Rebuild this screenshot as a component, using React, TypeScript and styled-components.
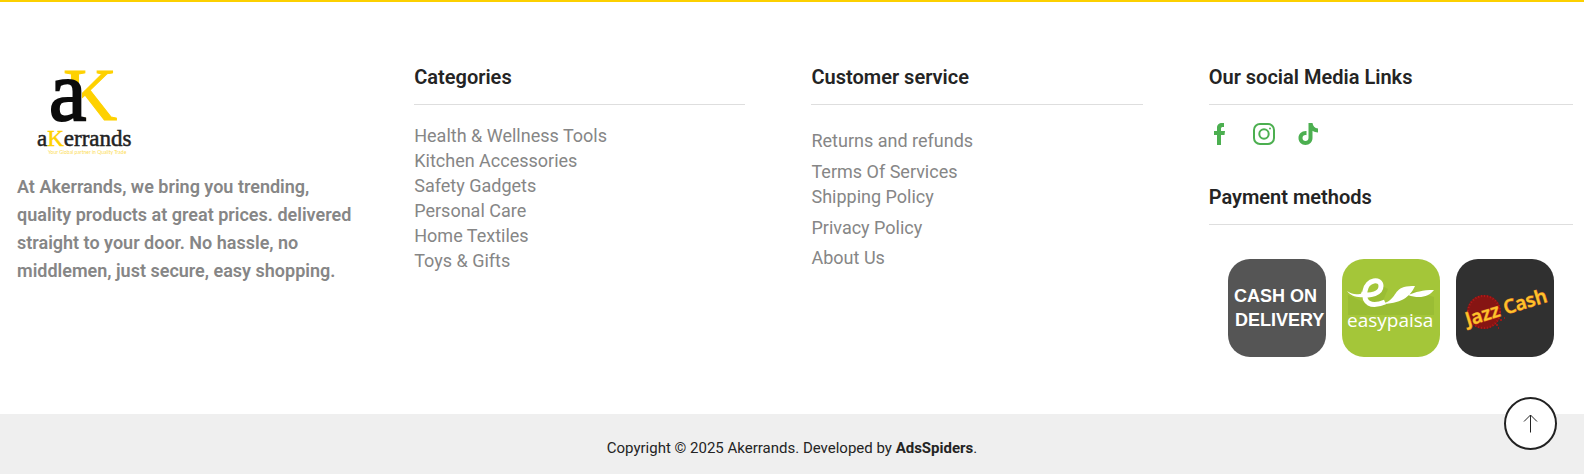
import React from 'react';
import styled, { createGlobalStyle } from 'styled-components';

const GlobalStyle = createGlobalStyle`
  *, *::before, *::after { box-sizing: border-box; }
  body { margin: 0; background: #fff; color: #242424; font-family: Roboto, "Liberation Sans", sans-serif; }
  h2, p, ul { margin: 0; padding: 0; }
  ul { list-style: none; }
  a { color: inherit; text-decoration: none; }
  svg { display: block; overflow: visible; }
`;

const Page = styled.footer`
  border-top: 2px solid #fcd000;
`;

const Columns = styled.div`
  display: grid;
  grid-template-columns: repeat(3, minmax(0, 331fr)) minmax(0, 364fr);
  column-gap: 66px;
  padding: 60px 11px 57px 17px;
`;

const Column = styled.section``;

const Brand = styled.a`
  display: block;
  width: 133px;
  margin-bottom: 8px;
`;

const About = styled.p`
  margin-right: -8px;
  color: #868686;
  font-size: 18px;
  font-weight: 600;
  line-height: 28px;
`;

const Heading = styled.h2`
  height: 43px;
  border-bottom: 1px solid #dedede;
  font-size: 20px;
  font-weight: 600;
  line-height: 30px;
`;

const Links = styled.ul<{ $top: number }>`
  padding-top: ${(p) => p.$top}px;
  color: #868686;
  font-size: 18px;
  line-height: 25px;
`;

const LinkItem = styled.li<{ $gap?: number }>`
  margin-bottom: ${(p) => p.$gap ?? 0}px;
`;

const Socials = styled.ul`
  display: flex;
  gap: 22px;
  padding: 17px 0 36px;
`;

const Payments = styled.ul`
  display: flex;
  justify-content: center;
  gap: 16px;
  padding-top: 34px;
`;

const Tile = styled.li`
  width: 98px;
  height: 98px;
`;

const Bottom = styled.div`
  padding: 22px 0 14px;
  background: #efefef;
  font-size: 15px;
  line-height: 24px;
  text-align: center;

  strong { font-weight: 700; }
`;

const ToTop = styled.button`
  position: fixed;
  right: 27px;
  bottom: 24px;
  display: grid;
  place-items: center;
  width: 53px;
  height: 53px;
  padding: 0;
  border: 2px solid #222;
  border-radius: 50%;
  background: #fff;
  color: #222;
  cursor: pointer;
`;

const Logo = () => (
  <svg width="133" height="103" viewBox="0 0 133 103" role="img" aria-label="aKerrands">
    <g fontFamily="Liberation Serif, serif">
      <text x="46" y="58" fontSize="75" fill="#fed100" stroke="#fed100">K</text>
      <path d="M44 18c12-2 20 2 21 12v30H44z" fill="#fff" />
      <text x="32" y="58" fontSize="84" stroke="#0b0b0b" strokeWidth="2" fill="#0b0b0b">a</text>
      <text x="20" y="84" fontSize="23" stroke="#222" strokeWidth="0.5" fill="#222">a<tspan fill="#fed100" stroke="#fed100">K</tspan>errands</text>
    </g>
    <text x="31" y="92" fontFamily="Lato, sans-serif" fontSize="5" fill="#fddd55">Your Global partner in Quality Trade</text>
  </svg>
);

const FacebookIcon = () => (
  <svg width="22" height="24" viewBox="0 0 22 24" fill="#4caf50" aria-hidden="true">
    <path d="M8 23V13H5V9h3V6C8 2.500 10 1 13 1h2v4h-1c-1.500 0-2 .6-2 2v2h4l-.5 4H12v10z" />
  </svg>
);

const InstagramIcon = () => (
  <svg width="22" height="24" viewBox="0 0 22 24" fill="none" stroke="#4caf50" strokeWidth="2" aria-hidden="true">
    <rect x="1" y="2" width="20" height="20" rx="6" />
    <circle cx="11" cy="12" r="4.700" />
    <circle cx="17" cy="6.500" r="1" fill="#4caf50" stroke="none" />
  </svg>
);

const TiktokIcon = () => (
  <svg width="22" height="24" viewBox="0 0 22 24" fill="#4caf50" aria-hidden="true">
    <path d="M11.500 1h4c.3 3 2.200 5.200 5.500 5.500v4c-2.100 0-3.900-.6-5.500-1.700V16c0 4-3 7-7 7s-7-3-7-7 3.400-7.300 8-6.900v4.100C7.200 12.700 5.500 14 5.500 16c0 1.700 1.300 3 3 3s3-1.300 3-3z" />
  </svg>
);

const CashOnDelivery = () => (
  <svg width="98" height="98" viewBox="0 0 98 98" role="img" aria-label="Cash on delivery">
    <rect width="98" height="98" rx="22" fill="#555" />
    <g fill="#fff" fontFamily="Liberation Sans, sans-serif" fontWeight="700" fontSize="18">
      <text x="6" y="43">CASH ON</text>
      <text x="7" y="67">DELIVERY</text>
    </g>
  </svg>
);

const Easypaisa = () => (
  <svg width="98" height="98" viewBox="0 0 98 98" role="img" aria-label="easypaisa">
    <rect width="98" height="98" rx="22" fill="#a4c639" />
    <path d="M6 36l18 8 14-18 8 4-6 14h8l15-10 10-2 19 6v18H6z" fill="#9abd34" />
    <path d="M19 35c10 3 20-1 20-8 0-8-14-7-16 5-2 12 6 17 20 11" fill="none" stroke="#fff" strokeWidth="5" />
    <path d="M5 32c6 4 10 4 17 2v4C14 39 8 36 5 32zM38 45c16-2 13-14 24-17 3-1 7-1 11-1-5 11-14 18-35 18zM66 36c8-3 14-5 26-5-5 7-15 9-26 5z" fill="#fff" />
    <text x="5" y="68" fill="#fff" fontFamily="Open Sans, sans-serif" fontSize="19">easypaisa</text>
  </svg>
);

const JazzCash = () => (
  <svg width="98" height="98" viewBox="0 0 98 98" role="img" aria-label="Jazz Cash">
    <rect width="98" height="98" rx="22" fill="#303030" />
    <circle cx="28" cy="53" r="17" fill="#861513" />
    <circle cx="28" cy="53" r="16" fill="none" stroke="#b51a1a" strokeWidth="2" strokeDasharray="1 2" />
    <path d="M40 66h2m2-5h2m-4 8h1m5-10h1" stroke="#981818" strokeWidth="2" />
    <g transform="rotate(-17 12 68)" fill="#fdc52b" stroke="#e07a20" strokeWidth="1" paintOrder="stroke" fontFamily="Open Sans, sans-serif" fontWeight="600" fontSize="19">
      <text x="12" y="67">Jazz Cash</text>
    </g>
  </svg>
);

const categories = ['Health & Wellness Tools', 'Kitchen Accessories', 'Safety Gadgets', 'Personal Care', 'Home Textiles', 'Toys & Gifts'];

const services = [
  { label: 'Returns and refunds', gap: 6 },
  { label: 'Terms Of Services', gap: 0 },
  { label: 'Shipping Policy', gap: 6 },
  { label: 'Privacy Policy', gap: 5 },
  { label: 'About Us', gap: 0 },
];

const socials = [
  { name: 'Facebook', Icon: FacebookIcon },
  { name: 'Instagram', Icon: InstagramIcon },
  { name: 'TikTok', Icon: TiktokIcon },
];

export default function App() {
  return (
    <>
      <GlobalStyle />
      <Page>
        <Columns>
          <Column>
            <Brand href="#"><Logo /></Brand>
            <About>At Akerrands, we bring you trending, quality products at great prices. delivered straight to your door. No hassle, no middlemen, just secure, easy shopping.</About>
          </Column>
          <Column>
            <Heading>Categories</Heading>
            <Links $top={18}>
              {categories.map((label) => <LinkItem key={label}><a href="#">{label}</a></LinkItem>)}
            </Links>
          </Column>
          <Column>
            <Heading>Customer service</Heading>
            <Links $top={23}>
              {services.map(({ label, gap }) => <LinkItem key={label} $gap={gap}><a href="#">{label}</a></LinkItem>)}
            </Links>
          </Column>
          <Column>
            <Heading>Our social Media Links</Heading>
            <Socials>
              {socials.map(({ name, Icon }) => <li key={name}><a href="#" aria-label={name}><Icon /></a></li>)}
            </Socials>
            <Heading>Payment methods</Heading>
            <Payments>
              <Tile><CashOnDelivery /></Tile>
              <Tile><Easypaisa /></Tile>
              <Tile><JazzCash /></Tile>
            </Payments>
          </Column>
        </Columns>
        <Bottom>Copyright © 2025 Akerrands. Developed by <a href="#"><strong>AdsSpiders</strong></a>.</Bottom>
        <ToTop type="button" aria-label="Back to top">
          <svg width="15" height="19" viewBox="0 0 15 19" fill="none" stroke="currentColor">
            <path d="M7.500 18.500V1M1 7.500l6.500-6.500L14 7.500" />
          </svg>
        </ToTop>
      </Page>
    </>
  );
}
